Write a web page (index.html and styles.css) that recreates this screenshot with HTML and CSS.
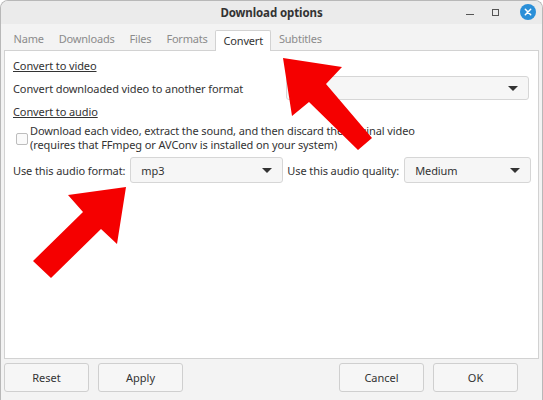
FILE: index.html
```html
<!DOCTYPE html>
<html>
<head>
<meta charset="utf-8">
<link rel="stylesheet" href="styles.css">
</head>
<body>
<div class="window">
  <div class="titlebar">
    <div class="title">Download options</div>
    <div class="controls">
      <span class="ctl min"></span>
      <span class="ctl max"></span>
      <span class="ctl close">
        <svg width="16" height="16" viewBox="0 0 16 16"><circle cx="8" cy="8" r="8" fill="#2a8fd8"/><path d="M5.3 5.3 L10.7 10.7 M10.7 5.3 L5.3 10.7" stroke="#fff" stroke-width="1.5" stroke-linecap="round"/></svg>
      </span>
    </div>
  </div>
  <div class="tabs">
    <span class="tab">Name</span>
    <span class="tab">Downloads</span>
    <span class="tab">Files</span>
    <span class="tab">Formats</span>
    <span class="tab active">Convert</span>
    <span class="tab">Subtitles</span>
  </div>
  <div class="panel">
    <div class="heading">Convert to video</div>
    <div class="row video-row">
      <span class="label">Convert downloaded video to another format</span>
      <div class="combo combo-video"><span class="val"></span><span class="tri"></span></div>
    </div>
    <div class="heading h2">Convert to audio</div>
    <div class="check-row">
      <span class="checkbox"></span>
      <span class="check-text">Download each video, extract the sound, and then discard the original video<br>(requires that FFmpeg or AVConv is installed on your system)</span>
    </div>
    <div class="row audio-row">
      <span class="label">Use this audio format:</span>
      <div class="combo combo-format"><span class="val">mp3</span><span class="tri"></span></div>
      <span class="label">Use this audio quality:</span>
      <div class="combo combo-quality"><span class="val">Medium</span><span class="tri"></span></div>
    </div>
  </div>
  <div class="buttons">
    <div class="group">
      <button class="btn">Reset</button>
      <button class="btn">Apply</button>
    </div>
    <div class="group">
      <button class="btn">Cancel</button>
      <button class="btn">OK</button>
    </div>
  </div>
</div>
<svg class="arrow arrow-top" width="543" height="400" viewBox="0 0 543 400">
  <polygon points="283,58 342,67 326,84 372,138 358,150 309,102 292,116" fill="#f50000"/>
</svg>
<svg class="arrow arrow-bottom" width="543" height="400" viewBox="0 0 543 400">
  <polygon points="126,187 117,244 101,229 51,278 33,261 83,212 68,195" fill="#f50000"/>
</svg>
</body>
</html>
```
FILE: styles.css
```css
* { box-sizing: border-box; }
html, body { margin: 0; padding: 0; }
body {
  width: 543px;
  height: 400px;
  background: #ffffff;
  font-family: "Noto Sans", "DejaVu Sans", sans-serif;
  font-size: 11px;
  letter-spacing: -0.1px;
  color: #3c3c3c;
  position: relative;
  overflow: hidden;
}
.window {
  width: 543px;
  height: 400px;
  background: #f3f3f3;
  border-radius: 8px 8px 0 0;
  border: 1px solid #b8b8b8;
  border-bottom: none;
  overflow: hidden;
  display: flex;
  flex-direction: column;
}
.titlebar {
  height: 23px;
  background: #ebebeb;
  position: relative;
  display: flex;
  align-items: center;
  justify-content: center;
  flex: none;
}
.title {
  font-weight: bold;
  font-size: 11.5px;
  color: #333;
}
.controls {
  position: absolute;
  right: 6px;
  top: 3px;
  display: flex;
  align-items: center;
}
.ctl { display: inline-block; }
.min {
  width: 8px; height: 1px;
  background: #555;
  margin-right: 18px;
  margin-top: 4px;
}
.max {
  width: 7px; height: 7px;
  border: 1px solid #555;
  margin-right: 21px;
}
.close { width: 16px; height: 16px; }
.close svg { display: block; }
.tabs {
  display: flex;
  align-items: flex-end;
  height: 26px;
  padding-left: 4px;
  flex: none;
}
.tab {
  padding: 0 7.5px;
  height: 21px;
  line-height: 20px;
  color: #8b8b8b;
  white-space: nowrap;
  letter-spacing: -0.2px;
}
.tab:first-child { padding-left: 8.5px; }
.tab.active {
  color: #333;
  background: #fff;
  border: 1px solid #d2d2d2;
  border-bottom: none;
  border-radius: 2px 2px 0 0;
  position: relative;
  top: 1px;
}
.panel {
  margin: 0 3px;
  height: 309px;
  background: #fff;
  border: 1px solid #d2d2d2;
  padding: 7px 9px 0 8px;
  flex: none;
}
.heading {
  text-decoration: underline;
  line-height: 16px;
  color: #333;
}
.label { white-space: nowrap; color: #333; }
.row {
  display: flex;
  align-items: center;
}
.video-row {
  margin-top: 2px;
  justify-content: space-between;
}
.h2 { margin-top: 4px; }
.combo {
  height: 24px;
  border: 1px solid #d6d6d6;
  border-radius: 3px;
  background: #f6f6f6;
  display: flex;
  align-items: center;
  justify-content: space-between;
  padding: 0 10px;
  color: #333;
  flex: none;
}
.combo-video { width: 243px; }
.combo-format { width: 153px; height: 26px; margin-left: 5px; margin-right: 4px; }
.combo-quality { width: 127px; height: 26px; margin-left: 5px; }
.tri {
  width: 0; height: 0;
  border-left: 5px solid transparent;
  border-right: 5px solid transparent;
  border-top: 5px solid #333;
}
.check-row {
  display: flex;
  align-items: flex-start;
  margin-top: 4px;
}
.checkbox {
  width: 12px; height: 12px;
  border: 1px solid #bdbdbd;
  border-radius: 2px;
  background: #fafafa;
  margin: 9px 2px 0 3px;
  flex: none;
}
.check-text {
  line-height: 14px;
  white-space: nowrap;
  color: #333;
}
.audio-row { margin-top: 5px; }
.buttons {
  display: flex;
  justify-content: space-between;
  padding: 4px 24px 0 3px;
}
.group { display: flex; gap: 9px; }
.btn {
  width: 85px;
  height: 29px;
  border: 1px solid #cfcfcf;
  border-radius: 3px;
  background: #f6f6f6;
  font-family: inherit;
  font-size: 11px;
  color: #333;
  padding: 0;
}
.arrow {
  position: absolute;
  left: 0;
  top: 0;
  pointer-events: none;
}
```
